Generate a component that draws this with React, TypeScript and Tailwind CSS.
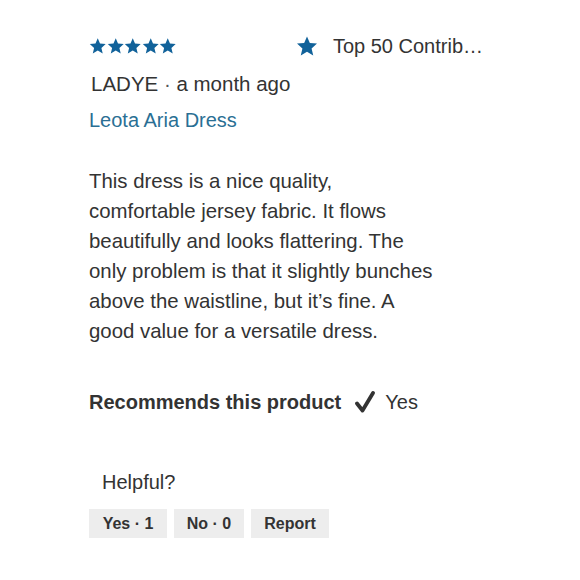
const Star = ({ className }: { className?: string }) => (
  <svg viewBox="0 0 24 24" className={className} fill="currentColor">
    <path d="M12 1.5l3.1 7.2 7.8.7-5.9 5.2 1.8 7.7L12 18.2l-6.8 4.1 1.8-7.7-5.9-5.2 7.8-.7z" />
  </svg>
)

const Check = () => (
  <svg viewBox="0 0 20 22" className="h-[22px] w-[20px]">
    <path d="M2 12.5l5.5 7L18 2" fill="none" stroke="#333" strokeWidth="3.8" strokeLinecap="round" strokeLinejoin="round" />
  </svg>
)

// line breaks follow the original layout
const bodyLines = [
  'This dress is a nice quality,',
  'comfortable jersey fabric. It flows',
  'beautifully and looks flattering. The',
  'only problem is that it slightly bunches',
  'above the waistline, but it\u2019s fine. A',
  'good value for a versatile dress.',
]

export default function App() {
  return (
    <div className="h-[580px] w-[580px] bg-white font-['Liberation_Sans',Arial,sans-serif] text-[#333]">
      <div className="ml-[89px] w-[400px] pt-[35px]">
        <div className="flex h-[22px] items-center justify-between">
          <div className="flex text-[#11629a]">
            {[0, 1, 2, 3, 4].map((i) => (
              <Star key={i} className="h-[18px] w-[17.5px]" />
            ))}
          </div>
          <div className="flex items-center gap-[15px] pr-[6px] text-[20px]">
            <Star className="h-[22px] w-[22px] text-[#11629a]" />
            <span>Top 50 Contrib…</span>
          </div>
        </div>

        <div className="mt-[15px] pl-[2px] text-[20.5px] leading-[24px]">
          LADYE <span className="text-[#555]">·</span> a month ago
        </div>
        <div className="mt-[12px] text-[20px] leading-[24px] text-[#2a6f94]">Leota Aria Dress</div>

        <p className="mt-[34px] text-[20.4px] leading-[30px]">
          {bodyLines.map((line) => (
            <span key={line} className="block whitespace-nowrap">
              {line}
            </span>
          ))}
        </p>

        <div className="mt-[44px] flex h-[24px] items-center text-[20px]">
          <span className="font-bold">Recommends this product</span>
          <span className="ml-[14px] mr-[10px]">
            <Check />
          </span>
          <span>Yes</span>
        </div>

        <div className="mt-[56px] pl-[13px] text-[20px] leading-[24px]">Helpful?</div>

        <div className="mt-[15px] flex gap-[7px] text-[16px] font-bold">
          <button className="h-[29px] w-[78px] bg-[#ededed]">Yes · 1</button>
          <button className="h-[29px] w-[70px] bg-[#ededed]">No · 0</button>
          <button className="h-[29px] w-[78px] bg-[#ededed]">Report</button>
        </div>
      </div>
    </div>
  )
}
